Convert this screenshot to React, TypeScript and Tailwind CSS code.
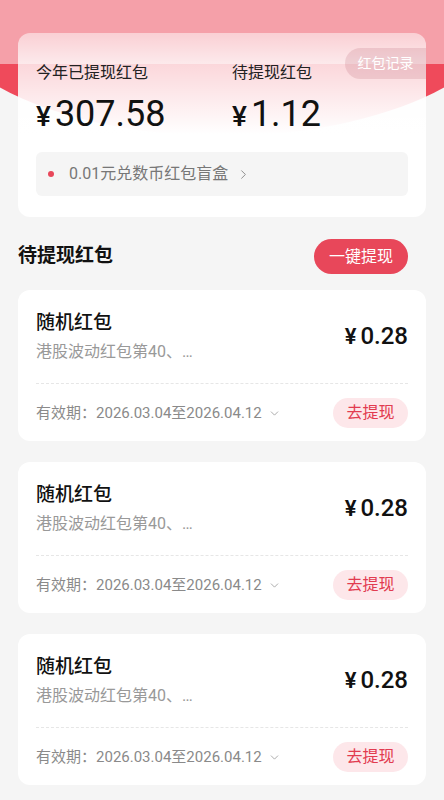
import { ChevronDown, ChevronRight } from 'lucide-react';

const packets = [
  { title: "随机红包", desc: "港股波动红包第40、…", amount: "0.28", period: "2026.03.04至2026.04.12" },
  { title: "随机红包", desc: "港股波动红包第40、…", amount: "0.28", period: "2026.03.04至2026.04.12" },
  { title: "随机红包", desc: "港股波动红包第40、…", amount: "0.28", period: "2026.03.04至2026.04.12" },
];

function Amount({ value, big }: { value: string; big?: boolean }) {
  if (big) {
    return (
      <p className="mt-[10px] flex h-[40px] items-baseline leading-[40px] text-[#111]">
        <span className="mr-[4px] text-[28px] font-medium">¥</span>
        <span className="text-[36px] font-normal">{value}</span>
      </p>
    );
  }
  return (
    <p className="flex items-baseline text-[#111]">
      <span className="mr-[4px] text-[22px] font-semibold">¥</span>
      <span className="text-[24px] font-medium">{value}</span>
    </p>
  );
}

export default function App() {
  return (
    <div className="relative h-[800px] overflow-hidden bg-[#f5f5f5] font-['Roboto','Noto_Sans_CJK_SC',sans-serif]">
      {/* header backdrop */}
      <div aria-hidden className="absolute left-[-78px] top-[-160px] h-[296px] w-[600px] rounded-[50%] bg-[#ef4a5b]" />
      <div aria-hidden className="absolute inset-x-0 top-0 h-[64px] bg-[#f5a0a9]" />

      <div className="relative px-[18px] pt-[33px]">
        <section className="relative overflow-hidden rounded-[12px] bg-linear-to-b from-white/50 via-white/78 via-17% to-white to-55% px-[18px] pb-[21px] pt-[29px]">
          <button className="absolute right-0 top-[15px] flex h-[31px] w-[81px] items-center justify-center rounded-l-full bg-[rgba(170,70,85,0.16)] text-[14px] text-white">
            红包记录
          </button>
          <div className="flex">
            <div className="w-[196px]">
              <p className="text-[16px] leading-[22px] text-[#222]">今年已提现红包</p>
              <Amount value="307.58" big />
            </div>
            <div>
              <p className="text-[16px] leading-[22px] text-[#222]">待提现红包</p>
              <Amount value="1.12" big />
            </div>
          </div>
          <div className="mt-[18px] flex h-[44px] items-center rounded-[6px] bg-[#f5f5f5] pl-[12px]">
            <span className="h-[6px] w-[6px] rounded-full bg-[#e8475a]" />
            <span className="ml-[15px] text-[16px] text-[#777]">0.01元兑数币红包盲盒</span>
            <ChevronRight size={15} strokeWidth={1.5} className="ml-[8px] text-[#888]" />
          </div>
        </section>

        <div className="mt-[22px] flex items-center justify-between pr-[18px]">
          <h2 className="text-[19px] font-bold text-[#111]">待提现红包</h2>
          <button className="flex h-[35px] w-[94px] items-center justify-center rounded-full bg-[#e8475a] text-[16px] text-white">
            一键提现
          </button>
        </div>

        <div className="mt-[16px] flex flex-col gap-[21px]">
          {packets.map((p, i) => (
            <div key={i} className="rounded-[12px] bg-white px-[18px] pb-[13px] pt-[20px]">
              <div className="flex items-center justify-between">
                <div>
                  <p className="text-[19px] font-medium leading-[26px] text-[#111]">{p.title}</p>
                  <p className="mt-[6px] text-[16px] leading-[20px] text-[#999]">{p.desc}</p>
                </div>
                <Amount value={p.amount} />
              </div>
              <div className="mt-[21px] border-t border-dashed border-[#e6e6e6]" />
              <div className="mt-[14px] flex items-center justify-between">
                <p className="flex items-center text-[15px] text-[#8a8a8a]">
                  有效期：{p.period}
                  <ChevronDown size={13} strokeWidth={1.5} className="ml-[6px] text-[#999]" />
                </p>
                <button className="flex h-[30px] w-[75px] items-center justify-center rounded-full bg-[#fde7ea] text-[16px] text-[#e23b50]">
                  去提现
                </button>
              </div>
            </div>
          ))}
        </div>
      </div>
    </div>
  );
}
